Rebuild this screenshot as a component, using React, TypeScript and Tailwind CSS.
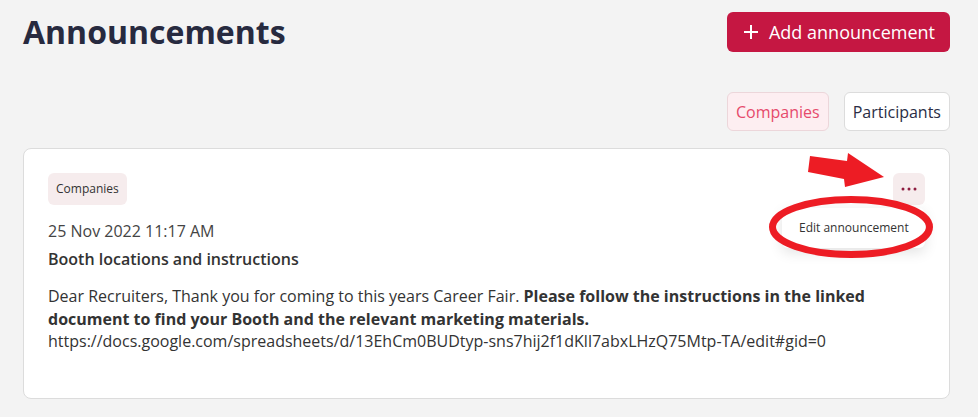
import React from "react";

export default function App() {
  return (
    <div
      className="relative w-[978px] h-[417px] overflow-hidden bg-[#f3f3f3]"
      style={{ fontFamily: '"Open Sans", "Noto Sans", sans-serif' }}
    >
      <div className="pl-[23px] pr-[28px] pt-[12px]">
        {/* Header */}
        <div className="flex items-center justify-between h-[40px]">
          <h1 className="text-[32px] font-bold text-[#272a3f] leading-none">Announcements</h1>
          <button className="flex items-center h-[40px] pl-[17px] pr-[15px] rounded-[6px] bg-[#c51742] text-white text-[18px]">
            <svg width="14" height="14" viewBox="0 0 14 14" className="mr-[11px]">
              <path d="M7 0v14M0 7h14" stroke="white" strokeWidth="2" />
            </svg>
            Add announcement
          </button>
        </div>

        {/* Tabs */}
        <div className="flex justify-end gap-[15px] mt-[40px]">
          <button className="h-[39px] px-[8px] rounded-[6px] border border-[#ecd6da] bg-[#fdeef1] text-[#e64a6c] text-[16px]">
            Companies
          </button>
          <button className="h-[39px] px-[8px] rounded-[6px] border border-[#dcdcdc] bg-white text-[#2a2d45] text-[16px]">
            Participants
          </button>
        </div>

        {/* Card */}
        <div className="mt-[17px] h-[251px] rounded-[8px] border border-[#dcdcdc] bg-white px-[24px] pt-[24px]">
          <div className="flex items-start justify-between">
            <span className="flex items-center h-[32px] px-[8px] rounded-[6px] bg-[#f6eced] text-[12px] text-[#333]">
              Companies
            </span>
            <div className="relative">
              <button className="flex items-center justify-center w-[32px] h-[32px] rounded-[6px] bg-[#f6eced]">
                <svg width="16" height="4" viewBox="0 0 16 4">
                  <circle cx="2" cy="2" r="1.5" fill="#8e1d40" />
                  <circle cx="8" cy="2" r="1.5" fill="#8e1d40" />
                  <circle cx="14" cy="2" r="1.5" fill="#8e1d40" />
                </svg>
              </button>
              <div className="absolute right-0 top-[35px] w-[143px] h-[40px] flex items-center pl-[17px] bg-white rounded-[6px] shadow-[0_4px_14px_rgba(0,0,0,0.12)] text-[12px] text-[#333] whitespace-nowrap">
                Edit announcement
              </div>
            </div>
          </div>
          <div className="mt-[14px] text-[16px] leading-[24px] text-[#444]">25 Nov 2022 11:17 AM</div>
          <div className="mt-[4px] text-[16px] leading-[24px] font-semibold text-[#333]">
            Booth locations and instructions
          </div>
          <p className="mt-[14px] text-[16px] leading-[22.5px] text-[#333]">
            Dear Recruiters, Thank you for coming to this years Career Fair.{" "}
            <b className="font-bold">
              Please follow the instructions in the linked document to find your Booth and the relevant marketing
              materials.
            </b>
            <br />
            https://docs.google.com/spreadsheets/d/13EhCm0BUDtyp-sns7hij2f1dKll7abxLHzQ75Mtp-TA/edit#gid=0
          </p>
        </div>
      </div>

      {/* Annotation overlay */}
      <svg className="absolute inset-0 pointer-events-none" width="978" height="417" viewBox="0 0 978 417">
        <polygon
          points="810,156 847,161 848,153 884,177 845,187 844,179 808,172"
          fill="#ed1c24"
        />
        <ellipse cx="851" cy="227" rx="78.5" ry="27.5" fill="none" stroke="#ed1c24" strokeWidth="7" />
      </svg>
    </div>
  );
}
